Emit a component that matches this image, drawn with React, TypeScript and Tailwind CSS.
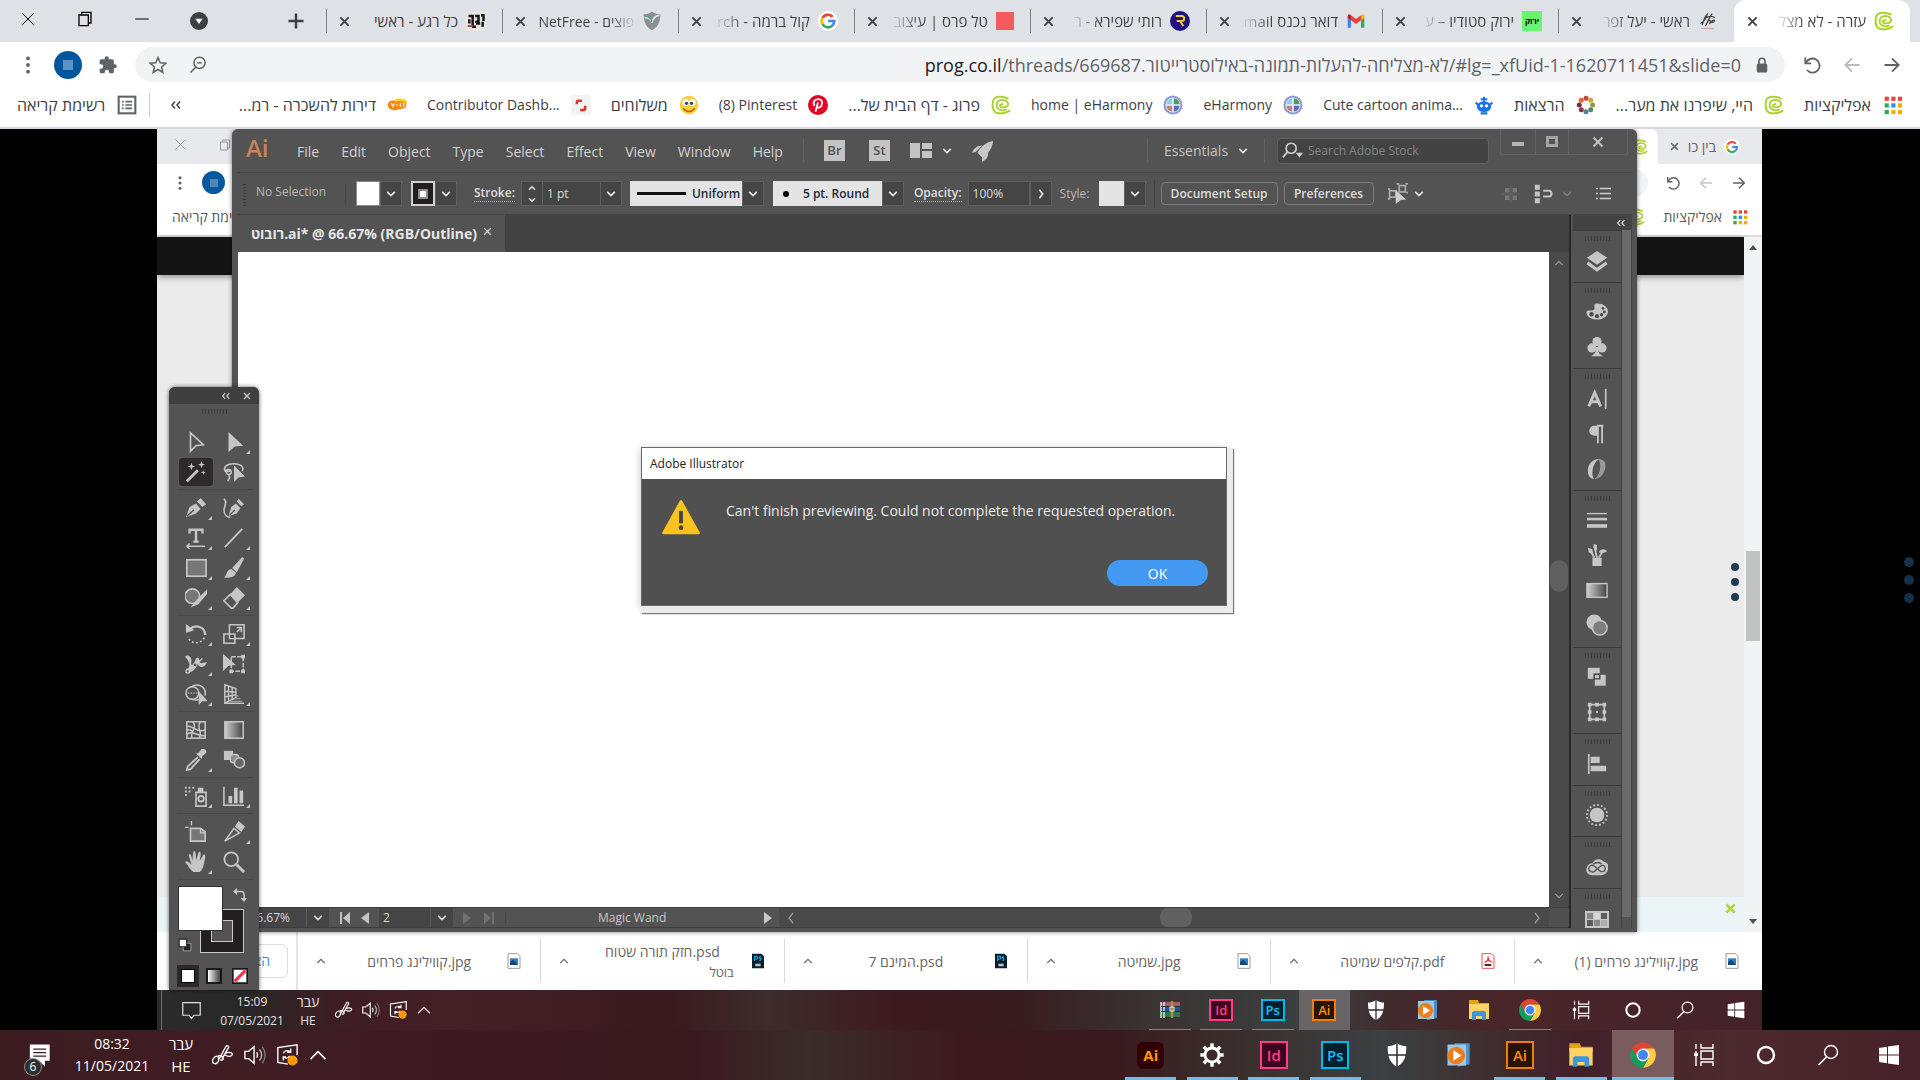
import type { ReactNode } from "react";

type IconProps = { className?: string };

const FONT = "font-['Open_Sans','Noto_Sans','Liberation_Sans',sans-serif]";

/* ---------- small shared glyphs ---------- */

function Svg({ children, className = "w-5 h-5", box = 24 }: IconProps & { children: ReactNode; box?: number }) {
  return (
    <svg viewBox={`0 0 ${box} ${box}`} className={`shrink-0 ${className}`} fill="none" aria-hidden="true">
      {children}
    </svg>
  );
}

function Cross({ className, width = 3 }: IconProps & { width?: number }) {
  return (
    <Svg className={className}>
      <path d="M3 3 21 21M21 3 3 21" stroke="currentColor" strokeWidth={width} />
    </Svg>
  );
}

function Chevron({ className, dir = "down", width = 4 }: IconProps & { dir?: "down" | "up" | "left" | "right"; width?: number }) {
  const d = {
    down: "M3 7l9 9 9-9",
    up: "M3 17l9-9 9 9",
    left: "M16 2l-8 10 8 10",
    right: "M8 2l8 10-8 10",
  }[dir];
  return (
    <Svg className={className}>
      <path d={d} stroke="currentColor" strokeWidth={width} />
    </Svg>
  );
}

function DoubleLeft({ className }: IconProps) {
  return (
    <Svg className={className}>
      <path d="M10 5 4 12l6 7M20 5l-6 7 6 7" stroke="currentColor" strokeWidth="3" />
    </Svg>
  );
}

function Swirl({ className }: IconProps) {
  return (
    <Svg className={className}>
      <path
        d="M20 4C14 1 4 1 2.500 7 1.500 12 2 18 5 20.500c4 2.500 12 2 17-1.500"
        stroke="#a9d32a"
        strokeWidth="2.400"
        strokeLinecap="round"
      />
      <path
        d="M18 17.500c-5 1.500-10 .5-11-3.500C6 8.500 9 6 13.500 6c5 0 7.500 3 7 5.500-.5 3.500-8 4-9.500 2.500-1-1.500 0-3 3-3"
        stroke="#a9d32a"
        strokeWidth="2.200"
        strokeLinecap="round"
      />
    </Svg>
  );
}

function GoogleG({ className }: IconProps) {
  return (
    <Svg className={className}>
      <circle cx="12" cy="12" r="12" fill="#fff" />
      <path d="M17.500 7A7.600 7.600 0 0 0 5.400 8.200" stroke="#ea4335" strokeWidth="3.200" />
      <path d="M5.400 8.200a7.600 7.600 0 0 0 0 7.600" stroke="#fbbc05" strokeWidth="3.200" />
      <path d="M5.400 15.800A7.600 7.600 0 0 0 17 17.700" stroke="#34a853" strokeWidth="3.200" />
      <path d="M17 17.700A7.600 7.600 0 0 0 19.600 12H12.200" stroke="#4285f4" strokeWidth="3.200" />
    </Svg>
  );
}

function AppsGrid({ className }: IconProps) {
  const colors = ["#ea4335", "#ea4335", "#ea4335", "#34a853", "#2f8ff0", "#f9ab00", "#34a853", "#f9ab00", "#f9ab00"];
  return (
    <Svg className={className}>
      {colors.map((c, i) => (
        <rect key={i} x={2 + (i % 3) * 8} y={2 + Math.floor(i / 3) * 8} width="5" height="5" fill={c} />
      ))}
    </Svg>
  );
}

function Reload({ className }: IconProps) {
  return (
    <Svg className={className}>
      <path d="M5 9a8.500 8.500 0 1 1 1 9" stroke="currentColor" strokeWidth="2.200" />
      <path d="M4 3v7h7" stroke="currentColor" strokeWidth="2.200" />
    </Svg>
  );
}

function Arrow({ className, dir }: IconProps & { dir: "left" | "right" }) {
  return (
    <Svg className={className}>
      <path
        d={dir === "left" ? "M21 12H4M12 4l-8 8 8 8" : "M3 12h17M12 4l8 8-8 8"}
        stroke="currentColor"
        strokeWidth="2.200"
      />
    </Svg>
  );
}

function Dots({ className }: IconProps) {
  return (
    <Svg className={className}>
      <circle cx="12" cy="4" r="2.300" fill="currentColor" />
      <circle cx="12" cy="12" r="2.300" fill="currentColor" />
      <circle cx="12" cy="20" r="2.300" fill="currentColor" />
    </Svg>
  );
}

/* ---------- favicons ---------- */

const favicons: Record<string, ReactNode> = {
  swirl: <Swirl className="w-5 h-5" />,
  google: <GoogleG className="w-5 h-5" />,
  script: (
    <Svg>
      <path d="M3 15c4-2 7-7 8-11-4 4-5 10-6 13M9 18c2-4 5-11 8-15M8 9c5-3 9-3 12-1M12 12c2-2 4-1 2 4M15 14c3-4 6-4 4-1-1 1-3 1-3 0" stroke="#444" strokeWidth="1.500" />
      <path d="M4 21h15" stroke="#d9a3ae" strokeWidth="1.500" />
    </Svg>
  ),
  green: (
    <span className="flex h-5 w-5 shrink-0 items-center justify-center bg-[#6af56e] text-[8px] font-bold text-black">ירוק</span>
  ),
  gmail: (
    <Svg>
      <path d="M2 6v14h4V10z" fill="#4285f4" />
      <path d="M22 6v14h-4V10z" fill="#34a853" />
      <path d="M6 5v6l6 4.500 6-4.500V5l-6 4.500z" fill="#ea4335" />
      <path d="M2 6c0-2 2-3 4-1v6l-4-3z" fill="#c5221f" />
      <path d="M22 6c0-2-2-3-4-1v6l4-3z" fill="#fbbc04" />
    </Svg>
  ),
  ruti: (
    <Svg>
      <circle cx="12" cy="12" r="12" fill="#1f1183" />
      <path d="M7 6h7c4 0 4 6 0 6H8M12 12l4 6" stroke="#f2cf1d" strokeWidth="2.400" />
    </Svg>
  ),
  square: <span className="h-[18px] w-[18px] shrink-0 bg-[#f25c61]" />,
  shield: (
    <Svg>
      <path d="M12 1c3 2 6 3 10 3 0 9-3 16-10 19C5 20 2 13 2 4c4 0 7-1 10-3z" fill="#8c8f91" />
      <path d="M3 8c5 0 8 2 9 6 1-5 3-8 9-9" stroke="#cfe8e2" strokeWidth="2" />
      <path d="M4 6c5 1 7 3 8 7" stroke="#3f9d8b" strokeWidth="1.500" />
    </Svg>
  ),
  rega: (
    <Svg>
      <rect width="24" height="24" fill="#e8e5e3" />
      <path d="M3 6h5v11M4 10v5M11 6h4v7h-4M18 5h3v7M12 15h5M20 13v6M7 19h5" stroke="#161616" strokeWidth="3" />
      <path d="M2 18h6" stroke="#c5483f" strokeWidth="2.500" />
    </Svg>
  ),
  flower: (
    <Svg>
      {["#c7443a", "#d9a02e", "#8f9a3c", "#4c8a6a", "#58818f", "#8c3356", "#7a2a3a", "#e0672f"].map((c, i) => (
        <circle key={c} cx={12 + 8 * Math.sin((i * Math.PI) / 4)} cy={12 - 8 * Math.cos((i * Math.PI) / 4)} r="3" fill={c} />
      ))}
    </Svg>
  ),
  robot: (
    <Svg>
      <ellipse cx="12" cy="14" rx="8.500" ry="6.500" fill="#1a73e8" />
      <path d="M12 2v6M8 5h8M2 9l3 3M22 9l-3 3M8 22h8" stroke="#1a73e8" strokeWidth="2.500" />
      <circle cx="9" cy="13" r="2" fill="#fff" />
      <circle cx="15" cy="13" r="2" fill="#fff" />
    </Svg>
  ),
  harmony: (
    <Svg>
      <circle cx="12" cy="12" r="11.500" fill="#8e9ad6" />
      <circle cx="12" cy="12" r="9" fill="#eef0fb" />
      <path d="M11 4v7H4a8 8 0 0 1 7-7z" fill="#8fd0e8" />
      <path d="M13 4v7h7a8 8 0 0 0-7-7z" fill="#4f9b4a" />
      <path d="M11 20v-7H4a8 8 0 0 0 7 7z" fill="#c9826f" />
      <path d="M13 20v-7h7a8 8 0 0 1-7 7z" fill="#5a6dc4" />
    </Svg>
  ),
  pinterest: (
    <Svg>
      <circle cx="12" cy="12" r="12" fill="#e60023" />
      <path d="M9 20l3-11M8 13c-3-4 0-8 4-8 5 0 6 4 4 8-1 2-4 3-5 1" stroke="#fff" strokeWidth="2.200" />
    </Svg>
  ),
  smiley: (
    <Svg>
      <circle cx="12" cy="12" r="11" fill="#f8cf3a" />
      <circle cx="8" cy="9" r="4" fill="#fff" />
      <circle cx="16" cy="9" r="4" fill="#fff" />
      <circle cx="9" cy="10" r="2" fill="#24506e" />
      <circle cx="15" cy="10" r="2" fill="#24506e" />
      <path d="M5 16c4 5 10 5 14 0" stroke="#b36a12" strokeWidth="1.800" />
    </Svg>
  ),
  shutter: (
    <Svg>
      <rect width="24" height="24" fill="#f3f3f3" />
      <path d="M7 11V9c0-1 1-2 2-2h4M17 13v3c0 1-1 2-2 2h-4" stroke="#ee2b24" strokeWidth="3" />
    </Svg>
  ),
  yad2: (
    <Svg>
      <path d="M1 12c0-5 5-6 9-5 4-2 13-2 13 3 1 6-3 7-8 7-5 2-14 2-14-5z" fill="#f58a12" />
      <path d="M10 7c4-2 13-2 13 3" stroke="#ffd21c" strokeWidth="3" />
      <path d="M5 10l2 3 2-3M7 13v2M11 12h2M16 10v4M19 10h1v4" stroke="#fff" strokeWidth="1.300" />
    </Svg>
  ),
};

const tabs = [
  { title: "ראשי - יעל זפר", icon: "script" },
  { title: "ירוק סטודיו – ע", icon: "green" },
  { title: "דואר נכנס mail", icon: "gmail" },
  { title: "רותי שפירא - ר", icon: "ruti" },
  { title: "טל פרס | עיצוב", icon: "square" },
  { title: "קול ברמה - rch", icon: "google" },
  { title: "NetFree - פוצים", icon: "shield", ltr: true },
  { title: "כל רגע - ראשי", icon: "rega", full: true },
];

const bookmarks = [
  { title: "היי, שיפרנו את מער...", icon: "swirl" },
  { title: "הרצאות", icon: "flower" },
  { title: "Cute cartoon anima...", icon: "robot", ltr: true },
  { title: "eHarmony", icon: "harmony", ltr: true },
  { title: "home | eHarmony", icon: "harmony", ltr: true },
  { title: "פרוג - דף הבית של...", icon: "swirl" },
  { title: "(8) Pinterest", icon: "pinterest", ltr: true },
  { title: "משלוחים", icon: "smiley" },
  { title: "Contributor Dashb...", icon: "shutter", ltr: true },
  { title: "דירות להשכרה - רמ...", icon: "yad2" },
];

/* ---------- outer browser ---------- */

type TabProps = { title: string; icon: string; ltr?: boolean; active?: boolean; full?: boolean };

function Tab({ title, icon, ltr, active, full }: TabProps) {
  const ink = full
    ? "text-[#3c4043]"
    : ltr
      ? "bg-gradient-to-l from-[#3c404320] to-[#3c4043] to-25% bg-clip-text text-transparent"
      : "bg-gradient-to-r from-[#3c404320] to-[#3c4043] to-30% bg-clip-text text-transparent";
  return (
    <div
      className={`flex h-full w-44 shrink-0 items-center gap-2 pr-4 pl-3 ${
        active ? "rounded-t-xl bg-white" : "relative after:absolute after:top-[9px] after:left-0 after:h-6 after:w-px after:bg-[#80868b]"
      }`}
    >
      {favicons[icon]}
      <span dir={ltr ? "ltr" : "rtl"} className={`shrink-0 whitespace-nowrap ${ltr ? "text-[14px]" : "text-[15px]"} ${ink}`}>
        {title}
      </span>
      <button aria-label={`סגירה ${title}`} className="mr-auto p-px text-[#3c4043]">
        <Cross className="h-[11px] w-[11px]" width={4} />
      </button>
    </div>
  );
}

function BrowserHeader() {
  return (
    <header dir="rtl" className="shrink-0 bg-white">
      <div className="flex h-[42px] bg-[#dee1e6] pr-2.5">
        <Tab title="עזרה - לא מצל" icon="swirl" active />
        {tabs.map((t) => (
          <Tab key={t.title} {...t} />
        ))}
        <button aria-label="כרטיסייה חדשה" className="mr-5 text-[#3c4043]">
          <Svg className="h-5 w-5">
            <path d="M12 3v18M3 12h18" stroke="currentColor" strokeWidth="3" />
          </Svg>
        </button>
        <div dir="ltr" className="mr-auto flex items-center pb-1 pl-5 text-black">
          <button aria-label="סגור" className="w-[57px]">
            <Cross className="h-4 w-4" width={1.5} />
          </button>
          <button aria-label="שחזר" className="w-[57px]">
            <Svg className="h-4 w-4">
              <path d="M3 6h14v16H3zM7 6V2h14v16h-4" stroke="currentColor" strokeWidth="2" />
            </Svg>
          </button>
          <button aria-label="מזער" className="w-14">
            <Svg className="h-4 w-4">
              <path d="M2 12h20" stroke="currentColor" strokeWidth="1.500" />
            </Svg>
          </button>
          <button aria-label="חיפוש כרטיסיות" className="pt-1">
            <Svg className="h-[18px] w-[18px]">
              <circle cx="12" cy="12" r="12" fill="#3c4043" />
              <path d="M7 9h10l-5 7z" fill="#fff" />
            </Svg>
          </button>
        </div>
      </div>

      <div className="flex h-[45px] items-center gap-5 px-[18px] text-[#5f6368]">
        <button aria-label="הבא"><Arrow dir="right" className="h-5 w-5" /></button>
        <button aria-label="הקודם" className="text-[#babcbe]"><Arrow dir="left" className="h-5 w-5" /></button>
        <button aria-label="טען מחדש"><Reload className="h-5 w-5" /></button>
        <div className="mx-[-3px] flex h-[35px] flex-1 items-center gap-3 rounded-full bg-[#f1f3f4] px-[14px]">
          <Svg className="h-[18px] w-[18px]">
            <rect x="5" y="10" width="14" height="12" rx="2" fill="currentColor" />
            <path d="M8 11V7a4 4 0 0 1 8 0v4" stroke="currentColor" strokeWidth="2.200" />
          </Svg>
          <div dir="ltr" className="flex-1 text-right text-[18px] leading-[26px] whitespace-nowrap">
            <span className="text-[#202124]">prog.co.il</span>
            /threads/669687.לא-מצליחה-להעלות-תמונה-באילוסטרייטור/#lg=_xfUid-1-1620711451&slide=0
          </div>
          <button aria-label="התצוגה הוקטנה">
            <Svg className="h-[18px] w-[18px]">
              <circle cx="14" cy="9" r="7.500" stroke="currentColor" strokeWidth="2" />
              <path d="M9 15l-7 7M11 9h6" stroke="currentColor" strokeWidth="2.200" />
            </Svg>
          </button>
          <button aria-label="הוספה לסימניות" className="mr-2.5">
            <Svg className="h-[18px] w-[18px]">
              <path d="M12 2l3 7 7.500.6-5.700 5 1.700 7.400L12 18l-6.500 4 1.700-7.400-5.700-5L9 9z" stroke="currentColor" strokeWidth="2" />
            </Svg>
          </button>
        </div>
        <button aria-label="תוספים">
          <Svg className="h-5 w-5">
            <path d="M20 11h-1V7c0-1-1-2-2-2h-4V4a2.500 2.500 0 0 0-5 0v1H4C3 5 2 6 2 7v4h1.500a2.700 2.700 0 0 1 0 5.400H2V20c0 1 1 2 2 2h4v-1.500a2.700 2.700 0 0 1 5.400 0V22H17c1 0 2-1 2-2v-4h1a2.500 2.500 0 0 0 0-5z" fill="currentColor" />
          </Svg>
        </button>
        <button aria-label="פרופיל" className="mx-[-4px] flex h-7 w-7 items-center justify-center rounded-full bg-[#00569d]">
          <span className="h-[10px] w-[10px] bg-[#5b93c4]" />
        </button>
        <button aria-label="תפריט"><Dots className="h-5 w-5" /></button>
      </div>

      <nav className="flex h-[42px] items-center gap-5 border-b-2 border-[#d7d8de] px-[17px] pb-1 text-[16px] leading-5 whitespace-nowrap text-[#3c4043]">
        <a href="#apps" className="flex items-center gap-3">
          <AppsGrid className="h-5 w-5" />
          אפליקציות
        </a>
        {bookmarks.map((b) => (
          <a key={b.title} href="#bookmark" className="flex items-center gap-[11px]">
            {favicons[b.icon]}
            <span dir={b.ltr ? "ltr" : "rtl"} className={b.ltr ? "text-[14px]" : ""}>
              {b.title}
            </span>
          </a>
        ))}
        <button className="mr-auto" aria-label="סימניות נוספות">
          <DoubleLeft className="h-3 w-3" />
        </button>
        <button className="flex h-6 items-center gap-3 border-r border-[#cbcdd0] pr-3">
          <Svg className="h-5 w-5">
            <rect x="2" y="2" width="20" height="20" stroke="#5f6368" strokeWidth="2.500" />
            <path d="M6 8h2M6 12h2M6 16h2M10 8h8M10 12h8M10 16h8" stroke="#5f6368" strokeWidth="2" />
          </Svg>
          רשימת קריאה
        </button>
      </nav>
    </header>
  );
}

/* ---------- taskbar ---------- */

function Chrome({ className }: IconProps) {
  return (
    <Svg className={className} box={48}>
      <path d="M4.950 13A22 22 0 0 1 43.050 13H24L14.500 29.500Z" fill="#db4437" />
      <path d="M43.050 13A22 22 0 0 1 24 46L33.500 29.500 24 13Z" fill="#ffcd40" />
      <path d="M24 46A22 22 0 0 1 4.950 13L14.500 29.500H33.500Z" fill="#0f9d58" />
      <circle cx="24" cy="24" r="11" fill="#f1f1f1" />
      <circle cx="24" cy="24" r="8.500" fill="#4285f4" />
    </Svg>
  );
}

function AdobeTile({ label, tone, small }: { label: string; tone: string; small?: boolean }) {
  return (
    <span
      className={`flex items-center justify-center border-2 leading-none font-semibold ${tone} ${
        small ? "h-[22px] w-6 text-[13px]" : "h-7 w-7 text-[15px]"
      }`}
    >
      {label}
    </span>
  );
}

const ID = "border-[#ff3f81] bg-[#3d0520] text-[#ff3f81]";
const PS = "border-[#00b8f0] bg-[#01202f] text-[#13c3fb]";
const AI = "border-[#f07c0a] bg-[#261300] text-[#f98c17]";

function appIcon(name: string, small?: boolean): ReactNode {
  const size = small ? "w-6 h-6" : "w-7 h-7";
  switch (name) {
    case "Id":
      return <AdobeTile label="Id" tone={ID} small={small} />;
    case "Ps":
      return <AdobeTile label="Ps" tone={PS} small={small} />;
    case "Ai":
      return <AdobeTile label="Ai" tone={AI} small={small} />;
    case "Ai new":
      return (
        <span className="flex h-[27px] w-[27px] items-center justify-center rounded-md bg-[#330000] text-[15px] leading-none font-bold text-[#ff9a00]">
          Ai
        </span>
      );
    case "WinRAR":
      return (
        <Svg className={size}>
          <rect x="3" y="4" width="19" height="5" fill="#a85c72" />
          <rect x="3" y="9" width="19" height="5" fill="#2454a0" />
          <rect x="3" y="14" width="19" height="5" fill="#2c7a46" />
          <path d="M3 4v16M6 4v16" stroke="#ddd" strokeWidth="1.500" />
          <path d="M3 8.500h19M3 13.500h19" stroke="#20242c" />
          <path d="M14 3v17" stroke="#c0843c" strokeWidth="2.400" />
          <rect x="12" y="9" width="4" height="4" stroke="#eee" />
        </Svg>
      );
    case "Settings":
      return (
        <Svg className={size}>
          <circle cx="12" cy="12" r="6" stroke="#fff" strokeWidth="2.500" />
          {[0, 45, 90, 135, 180, 225, 270, 315].map((a) => (
            <path key={a} d="M12 2V6" stroke="#fff" strokeWidth="3" transform={`rotate(${a} 12 12)`} />
          ))}
        </Svg>
      );
    case "Security":
      return (
        <Svg className={size}>
          <path d="M12 2c3 2 5 2.500 8 2.500C20 14 18 19 12 22 6 19 4 14 4 4.500 7 4.500 9 4 12 2z" fill="#fff" />
          <path d="M12 2v20M4 12h16" stroke="#3b2b2d" strokeWidth="1.300" />
        </Svg>
      );
    case "Media Player":
      return (
        <Svg className={size}>
          <path d="M9 2h13v18l-10 2z" fill="#4b8fc0" />
          <path d="M3 3h16v18H3z" fill="#9cc9e6" />
          <circle cx="10.500" cy="12.500" r="7.500" fill="#ef7c1b" />
          <path d="M8 8v9l7-4.500z" fill="#fff" />
        </Svg>
      );
    case "Explorer":
      return (
        <Svg className={size}>
          <path d="M2 2h9l1 3h10v4H2z" fill="#e2a512" />
          <path d="M2 6h20v15H2z" fill="#ffd264" />
          <path d="M5 22v-7c0-1 1-2 2-2h10c1 0 2 1 2 2v7h-4v-4H9v4z" fill="#3a96dd" />
        </Svg>
      );
    case "Chrome":
      return <Chrome className={size} />;
    case "Task View":
      return (
        <Svg className={small ? "w-5 h-5" : "w-6 h-6"}>
          <path d="M3 1v5M3 8v15M8 1v4h12V1M8 8h12v8H8zM8 23v-4h12v4" stroke="#fff" strokeWidth="1.400" />
          <rect x="1" y="10" width="4" height="3" fill="#fff" />
        </Svg>
      );
    case "Cortana":
      return (
        <Svg className={small ? "w-5 h-5" : "w-6 h-6"}>
          <circle cx="12" cy="12" r="8" stroke="#fff" strokeWidth="2.400" />
        </Svg>
      );
    case "Search":
      return (
        <Svg className={small ? "w-5 h-5" : "w-6 h-6"}>
          <circle cx="15" cy="9" r="6.500" stroke="#fff" strokeWidth="1.400" />
          <path d="M10.500 14l-8 8" stroke="#fff" strokeWidth="1.600" />
        </Svg>
      );
    default:
      return (
        <Svg className={small ? "w-5 h-5" : "w-6 h-6"}>
          <path d="M2 5l8-1.200V11.500H2zM11 3.600L22 2v9.500H11zM2 12.500h8v7.700L2 19zM11 12.500h11V22l-11-1.600z" fill="#fff" />
        </Svg>
      );
  }
}

function TrayIcons({ small }: { small?: boolean }) {
  const size = small ? "w-[18px] h-[18px]" : "w-[22px] h-[22px]";
  return (
    <div className={`flex items-center ${small ? "gap-[9px]" : "gap-2.5"}`}>
      <Svg className={size}>
        <path
          d="M6 13c-5 1-7 6-4 8 4 2 6-3 5-6-1-2 1-3 3-2 4 2 2 6-1 4M8 16 15 3c1-2 4-1 3 1l-7 12M15 10c4-2 8 0 7 2s-5 2-8 0"
          stroke="#fff"
          strokeWidth="1.500"
        />
      </Svg>
      <Svg className={size}>
        <path d="M1 8h4l6-5v18l-6-5H1z" stroke="#fff" strokeWidth="1.500" />
        <path d="M14 9c1 2 1 4 0 6" stroke="#fff" strokeWidth="1.500" />
        <path d="M17 6c3 4 3 8 0 12" stroke="#bbb" strokeWidth="1.500" />
        <path d="M20 3c4 6 4 12 0 18" stroke="#777" strokeWidth="1.500" />
      </Svg>
      <Svg className={size}>
        <path d="M23 12V1L2 4v16l11 2" stroke="#fff" strokeWidth="1.500" />
        <path d="M8 10c1-3 6-4 8-1M16 5v4h-4M15 13c-2 3-5 3-7 1M8 18v-4h3" stroke="#fff" strokeWidth="1.500" />
        <circle cx="18" cy="18" r="5.500" fill="#ff9a0a" />
      </Svg>
      <Chevron dir="up" width={2} className={small ? "h-4 w-4" : "h-5 w-5"} />
    </div>
  );
}

type App = { name: string; running?: boolean; active?: boolean };

const outerApps: App[] = [
  { name: "Ai new", running: true },
  { name: "Settings", running: true },
  { name: "Id", running: true },
  { name: "Ps", running: true },
  { name: "Security" },
  { name: "Media Player" },
  { name: "Ai", running: true },
  { name: "Explorer", running: true },
  { name: "Chrome", running: true, active: true },
  { name: "Task View" },
  { name: "Cortana" },
  { name: "Search" },
  { name: "Start" },
];

const innerApps: App[] = [
  { name: "WinRAR", running: true },
  { name: "Id", running: true },
  { name: "Ps", running: true },
  { name: "Ai", active: true },
  { name: "Security" },
  { name: "Media Player" },
  { name: "Explorer" },
  { name: "Chrome", running: true },
  { name: "Task View" },
  { name: "Cortana" },
  { name: "Search" },
  { name: "Start" },
];

function OuterTaskbar() {
  return (
    <footer className="flex h-[50px] shrink-0 bg-[linear-gradient(90deg,#3b1c21_0%,#401c23_12%,#3a191f_36%,#3a2c2b_42%,#3d1a20_50%,#391a1e_58%,#3a2b29_63%,#3b4042_72%,#3f3031_77%,#41202a_82%,#4d2a2c_90%,#47212a_100%)] text-white">
      <button aria-label="Notifications" className="relative ml-6 w-8">
        <Svg className="h-7 w-7">
          <path d="M5 3h17v14h-4v5l-5-5H5z" fill="#fff" />
          <path d="M8 7h11M8 10h11M8 13h11" stroke="#3b1c21" strokeWidth="1.200" />
        </Svg>
        <span className="absolute bottom-1 left-0 flex h-[18px] w-[18px] items-center justify-center rounded-full border border-[#8d8d8d] bg-[#2f2f2f] text-[12px]">
          6
        </span>
      </button>
      <div className="w-28 text-center text-[14px] leading-[22px]">
        <div className="pt-[3px]">08:32</div>
        <div>11/05/2021</div>
      </div>
      <div className="w-[26px] text-center text-[15px] leading-[22px] whitespace-nowrap">
        <div className="pt-[3px]">עבר</div>
        <div>HE</div>
      </div>
      <div className="ml-[18px] flex">
        <TrayIcons />
      </div>
      <div className="ml-auto flex w-[800px]">
        {outerApps.map((a) => (
          <button
            key={a.name}
            aria-label={a.name}
            className={`relative flex flex-1 items-center justify-center ${a.active ? "bg-[#7b5c5e]" : ""}`}
          >
            {appIcon(a.name)}
            {a.running && <span className={`absolute bottom-0 h-[3px] bg-[#76b9ed] ${a.active ? "w-full" : "w-[51px]"}`} />}
          </button>
        ))}
      </div>
    </footer>
  );
}

function InnerTaskbar() {
  return (
    <div className="flex h-10 shrink-0 bg-[linear-gradient(90deg,#2b2b2b_0%,#292828_5%,#3c1d22_11%,#452026_18%,#3a1a1f_32%,#3d2c2b_38%,#3d1a20_46%,#381d20_54%,#3a3433_62%,#3c3f40_72%,#412a2c_77%,#4a262a_84%,#45222a_100%)] text-[#e6e0e0]">
      <span className="ml-1 w-px bg-[#6d6d6d]" />
      <Svg className="mt-[11px] ml-5 h-[19px] w-[19px]">
        <path d="M1 2h22v16h-8l-3 4-3-4H1z" stroke="currentColor" strokeWidth="1.500" />
      </Svg>
      <div className="ml-3.5 w-[74px] text-center text-[12px] leading-[19px]">
        <div className="pt-0.5">15:09</div>
        <div>07/05/2021</div>
      </div>
      <div className="ml-[7px] w-6 text-center leading-[19px]">
        <div className="pt-0.5 text-[14px]">עבר</div>
        <div className="text-[12px]">HE</div>
      </div>
      <div className="ml-[15px] flex">
        <TrayIcons small />
      </div>
      <div className="ml-auto flex w-[618px]">
        {innerApps.map((a) => (
          <button
            key={a.name}
            aria-label={a.name}
            className={`relative flex flex-1 items-center justify-center ${a.active ? "bg-[#686365]" : ""}`}
          >
            {appIcon(a.name, true)}
            {a.running && <span className="absolute bottom-0 h-px w-[42px] bg-[#6f86a8]" />}
          </button>
        ))}
      </div>
    </div>
  );
}

/* ---------- page shown behind the Illustrator window ---------- */

function FileIcon({ kind }: { kind: string }) {
  if (kind === "psd") {
    return (
      <Svg className="h-4 w-4">
        <path d="M3 1h14l4 4v18H3z" fill="#071e2c" />
        <path d="M7 12V5h3c2 0 2 4 0 4H7M17 6c-3-1-4 1-2 2s2 3-1 3" stroke="#29b3f2" strokeWidth="1.600" />
        <path d="M8 18h8" stroke="#bbb" strokeWidth="4" />
      </Svg>
    );
  }
  if (kind === "pdf") {
    return (
      <Svg className="h-4 w-4">
        <path d="M3 1h14l4 4v18H3z" fill="#fff" stroke="#ef5350" strokeWidth="1.500" />
        <path d="M12 5c1 5-2 8-5 9 3-3 8-3 10-1-4-1-5-5-5-8z" stroke="#e53935" strokeWidth="1.800" />
        <path d="M7 18h10" stroke="#333" strokeWidth="3" />
      </Svg>
    );
  }
  return (
    <Svg className="h-4 w-4">
      <path d="M3 1h14l4 4v18H3z" fill="#fff" stroke="#9a9a9a" strokeWidth="1.500" />
      <path d="M6 8h12v10H6z" fill="#2e7fc2" />
      <path d="M6 18v-4l5-4 7 8z" fill="#17456f" />
    </Svg>
  );
}

const downloads = [
  { name: "קווילינג פרחים.jpg", kind: "jpg" },
  { name: "חזק תורה שטוח.psd", kind: "psd", note: "בוטל" },
  { name: "המינם 7.psd", kind: "psd" },
  { name: "שמיטה.jpg", kind: "jpg" },
  { name: "קלפים שמיטה.pdf", kind: "pdf" },
  { name: "קווילינג פרחים (1).jpg", kind: "jpg" },
];

function InnerBrowser() {
  return (
    <div className="flex flex-1 flex-col bg-white">
      <div className="flex h-[35px] shrink-0 justify-between bg-[#e7e9ed]">
        <div className="flex items-center gap-8 pb-1 pl-[17px] text-[#999]">
          <Cross className="h-[13px] w-[13px]" width={1.8} />
          <Svg className="h-3 w-3">
            <path d="M3 6h14v16H3zM7 6V2h14v16h-4" stroke="currentColor" strokeWidth="2" />
          </Svg>
        </div>
        <div className="flex">
          <div className="flex w-40 items-center justify-end rounded-tr-lg bg-white pr-2.5">
            <Swirl className="h-4 w-4" />
          </div>
          <div className="flex w-[104px] items-center gap-2 pr-[22px] pl-3 text-[14px] text-[#666]">
            <Cross className="h-[9px] w-[9px]" width={4} />
            <span dir="rtl" className="flex-1 text-right whitespace-nowrap">
              בין כו
            </span>
            <GoogleG className="h-4 w-4" />
          </div>
        </div>
      </div>
      <div className="flex h-[38px] shrink-0 items-center justify-between text-[#5f6368]">
        <div className="flex items-center gap-3.5 pb-px pl-[15px]">
          <Dots className="h-4 w-4" />
          <span className="flex h-[23px] w-[23px] items-center justify-center rounded-full bg-[#07589c]">
            <span className="h-2 w-2 bg-[#4d86b8]" />
          </span>
        </div>
        <div className="flex items-center gap-[17px] pr-[15px]">
          <span className="h-7 w-28 rounded-full bg-[#f1f3f4]" />
          <Reload className="h-4 w-4" />
          <Arrow dir="left" className="h-4 w-4 text-[#c5c5c5]" />
          <Arrow dir="right" className="h-4 w-4" />
        </div>
      </div>
      <div className="flex h-[35px] shrink-0 items-center justify-between border-b-2 border-[#dcdcdf] pb-1 text-[14px] whitespace-nowrap text-[#5a5a5a]">
        <span dir="rtl" className="pl-[15px]">
          רשימת קריאה
        </span>
        <div className="flex items-center gap-2.5 pr-3.5">
          <Swirl className="mr-2 h-[18px] w-[18px]" />
          אפליקציות
          <AppsGrid className="h-4 w-4" />
        </div>
      </div>

      <div className="flex flex-1">
        <div className="flex flex-1 flex-col bg-[#ebebeb]">
          <div className="h-[38px] bg-[#141414] shadow-[0_2px_6px_#0006]" />
          <div className="flex flex-1 flex-col items-end justify-center gap-[7px] pr-[5px] pb-2">
            <span className="h-2 w-2 rounded-full bg-[#1f3d52]" />
            <span className="h-2 w-2 rounded-full bg-[#1f3d52]" />
            <span className="h-2 w-2 rounded-full bg-[#1f3d52]" />
          </div>
          <div className="flex h-[35px] justify-end bg-[#ebf5f7] pt-1.5 pr-2">
            <Cross className="h-[11px] w-[11px] text-[#b5d334]" width={6} />
          </div>
        </div>
        <div className="flex w-[18px] flex-col items-center justify-between bg-[#f1f3f4] py-2">
          <svg viewBox="0 0 8 5" className="h-[5px] w-2"><path d="M0 5l4-5 4 5z" fill="#505050" /></svg>
          <span className="mb-[-22px] h-[90px] w-3.5 bg-[#c1c3c3]" />
          <svg viewBox="0 0 8 5" className="h-[5px] w-2"><path d="M0 0l4 5 4-5z" fill="#505050" /></svg>
        </div>
      </div>

      <div className="flex h-[58px] shrink-0 pr-1 text-[14px] leading-5 text-[#666]">
        <div className="flex w-[141px] items-center justify-end border-r-2 border-[#e4e4e4] pr-2">
          <a href="#show-all" dir="rtl" className="flex h-[34px] w-[90px] items-center justify-start rounded-md border border-[#ddd] pr-[17px] text-[#3d8fd4]">
            הצגת הכול
          </a>
        </div>
        {downloads.map((d, i) => (
          <div key={d.name} className="flex flex-1 items-center py-[7px]">
            <div className={`flex h-full flex-1 items-center justify-between px-[18px] ${i < 5 ? "border-r border-[#dadada]" : ""}`}>
              <Chevron dir="up" width={3} className="h-2.5 w-2.5" />
              <div className="pt-0.5 pl-1.5 text-center whitespace-nowrap">
                <div>{d.name}</div>
                {d.note && <div className="mr-[-14px] text-right text-[13px]">{d.note}</div>}
              </div>
              <FileIcon kind={d.kind} />
            </div>
          </div>
        ))}
      </div>
    </div>
  );
}

/* ---------- Illustrator window ---------- */

function DropButton({ label, dir = "down" }: { label: string; dir?: "down" | "right" }) {
  return (
    <button aria-label={label} className="flex h-[25px] w-[22px] items-center justify-center border border-[#5f5f5f] bg-[#454545] text-[#e8e8e8]">
      <Chevron dir={dir} className="h-2.5 w-2.5" />
    </button>
  );
}

const menus = ["File", "Edit", "Object", "Type", "Select", "Effect", "View", "Window", "Help"];

function MenuBar() {
  return (
    <div className="flex h-[43px] items-center pl-3.5 text-[14px] text-[#d2d2d2]">
      <span className="w-[51px] pb-1.5 text-[24px] font-semibold text-[#c98256]">Ai</span>
      <nav className="flex gap-[22px] pt-0.5">
        {menus.map((m) => (
          <button key={m}>{m}</button>
        ))}
      </nav>
      <span className="ml-5 h-6 w-px bg-[#606060]" />
      <button className="ml-5 h-[21px] w-[21px] bg-[#c3c3c3] text-[13px] leading-none font-semibold text-[#505050]">Br</button>
      <button className="ml-6 h-[21px] w-[21px] bg-[#c3c3c3] text-[13px] leading-none font-semibold text-[#505050]">St</button>
      <button aria-label="Arrange Documents" className="ml-5 flex items-center gap-2.5">
        <svg viewBox="0 0 22 15" className="h-[15px] w-[22px]">
          <path d="M0 0h10v15H0zM12 0h10v6H12zM12 8h10v7H12z" fill="#c3c3c3" />
        </svg>
        <Chevron className="h-2.5 w-2.5 text-[#e8e8e8]" />
      </button>
      <button aria-label="GPU Performance" className="ml-5">
        <Svg className="h-[22px] w-[22px]">
          <path d="M23 1C16 2 9 7 6 14l5 5c7-4 11-10 12-18z" fill="#c8c8c8" />
          <path d="M11 6C6 6 2 9 0 14l4-1zM17 13c2 4-1 8-6 11v-6z" fill="#c8c8c8" />
        </Svg>
      </button>
      <div className="ml-auto flex h-full items-center">
        <span className="h-6 w-px bg-[#606060]" />
        <div className="relative ml-4 flex items-center">
          <select aria-label="Workspace" className="w-[88px] appearance-none text-[14px] text-[#c3c3c3]">
            <option>Essentials</option>
          </select>
          <Chevron className="pointer-events-none absolute right-1 h-2.5 w-2.5 text-[#e8e8e8]" />
        </div>
        <span className="ml-3 h-6 w-px bg-[#606060]" />
        <label className="ml-3 flex h-[26px] w-[212px] items-center gap-1 rounded-sm border border-[#606060] bg-[#434343] px-1">
          <Svg className="h-[22px] w-[22px]">
            <circle cx="10" cy="9" r="5.500" stroke="#cfcfcf" strokeWidth="1.800" />
            <path d="M6 13l-5 6" stroke="#cfcfcf" strokeWidth="2" />
            <path d="M15 14h8l-4 5z" fill="#cfcfcf" />
          </Svg>
          <input type="search" aria-label="Search Adobe Stock" placeholder="Search Adobe Stock" className="w-full min-w-0 bg-transparent text-[12px] placeholder-[#858585] outline-none" />
        </label>
        <div className="mr-[9px] ml-[11px] flex h-[26px] self-start border border-t-0 border-[#606060] text-[#c0c0c0]">
          <button aria-label="Minimize" className="flex w-[34px] items-center justify-center pt-1">
            <span className="h-1 w-3 bg-[#b5b5b5]" />
          </button>
          <button aria-label="Maximize" className="flex w-[34px] items-center justify-center border-x border-[#606060]">
            <span className="h-[11px] w-3 border-[3px] border-[#a5a5a5]" />
          </button>
          <button aria-label="Close" className="flex w-[58px] items-center justify-center">
            <Cross className="h-3 w-3" width={4} />
          </button>
        </div>
      </div>
    </div>
  );
}

function ControlBar() {
  return (
    <div className="mx-[5px] flex h-[43px] items-center border-y border-[#464646] text-[12px] text-[#dedede]">
      <span className="ml-1.5 h-6 w-[3px] bg-[repeating-linear-gradient(0deg,#404040_0_1px,transparent_1px_3px)]" />
      <span className="ml-2.5 w-[90px] border-r border-[#4a4a4a] pb-1 text-[#b9b9b9]">No Selection</span>
      <button aria-label="Fill" className="ml-2.5 h-[25px] w-6 border border-[#888] bg-white" />
      <DropButton label="Fill options" />
      <button aria-label="Stroke color" className="ml-[9px] flex h-[25px] w-6 items-center justify-center border-2 border-[#d0d0d0] bg-[#231f20]">
        <span className="h-2.5 w-2.5 border-2 border-[#8c8c8c] bg-white" />
      </button>
      <DropButton label="Stroke color options" />
      <label htmlFor="stroke" className="ml-[17px] border-b border-dotted border-[#aaa] leading-4 font-semibold">Stroke:</label>
      <div className="ml-1.5 flex">
        <button aria-label="Stroke weight stepper" className="flex h-[25px] w-[22px] flex-col items-center justify-center gap-1 border border-[#5f5f5f] bg-[#454545] text-[#e8e8e8]">
          <Chevron dir="up" className="h-2 w-2.5" />
          <Chevron className="h-2 w-2.5" />
        </button>
        <input id="stroke" defaultValue="1 pt" className="h-[25px] w-[57px] border-y border-[#5f5f5f] bg-[#454545] pl-1 outline-none" />
        <DropButton label="Stroke weights" />
      </div>
      <div className="ml-2 flex h-[25px] w-28 items-center bg-[#e4e4e4] pl-[7px] text-[#222a3a]">
        <span className="h-[3px] w-[49px] shrink-0 bg-[#14100f]" />
        <select aria-label="Variable Width Profile" className="w-[56px] appearance-none pl-1.5 font-semibold">
          <option>Uniform</option>
        </select>
      </div>
      <DropButton label="Width profiles" />
      <div className="ml-[9px] flex h-[25px] w-[109px] items-center bg-[#e4e4e4] pl-2.5 text-[#222a3a]">
        <span className="h-1.5 w-1.5 shrink-0 rounded-full bg-black" />
        <select aria-label="Brush Definition" className="w-22 appearance-none pl-3.5 font-semibold">
          <option>5 pt. Round</option>
        </select>
      </div>
      <DropButton label="Brushes" />
      <label htmlFor="opacity" className="ml-2.5 border-b border-dotted border-[#aaa] leading-4 font-semibold">Opacity:</label>
      <input id="opacity" defaultValue="100%" className="ml-1.5 h-[25px] w-[62px] border border-[#5f5f5f] bg-[#454545] pl-1 outline-none" />
      <DropButton label="Opacity slider" dir="right" />
      <span className="ml-2 w-8 text-[#b9b9b9]">Style:</span>
      <button aria-label="Graphic style" className="ml-[7px] h-[25px] w-[25px] bg-[#e4e4e4]" />
      <DropButton label="Graphic styles" />
      <span className="ml-2 h-7 w-px bg-[#454545]" />
      <button className="ml-1.5 h-[23px] w-[117px] rounded-sm border border-[#7a7a7a] font-semibold">Document Setup</button>
      <button className="ml-1.5 h-[23px] w-[90px] rounded-sm border border-[#7a7a7a] font-semibold">Preferences</button>
      <button aria-label="Select similar objects" className="ml-[13px] flex items-center gap-1.5">
        <Svg className="h-[21px] w-[21px]">
          <path d="M3 9h7v7H3zM14 3h7v7h-7z" stroke="#aaa" strokeWidth="2" />
          <path d="M1 7h3M1 18h3M11 1h3M21 1h3M22 11h2" stroke="#aaa" strokeWidth="2" />
          <path d="M10 8l12 11h-6l-6 5z" fill="#d0d0d0" />
        </Svg>
        <Chevron className="h-2.5 w-2.5" />
      </button>
      <div className="mr-[21px] ml-auto flex items-center">
        <Svg className="h-[18px] w-[18px]">
          <path d="M4 4h6v6H4zM14 4h6v6h-6zM4 14h6v6H4zM14 14h6v6h-6z" fill="#767676" />
          <path d="M12 0v24M0 12h24" stroke="#6a6a6a" />
        </Svg>
        <Svg className="ml-3.5 h-5 w-5">
          <path d="M1 1h6v6H1zM1 9h6v6H1zM1 17h6v6H1z" fill="#c3c3c3" />
          <path d="M11 8h7c4 0 4 7 0 7h-7" stroke="#c3c3c3" strokeWidth="2.500" />
        </Svg>
        <Chevron className="ml-2 h-2.5 w-2.5 text-[#7a7a7a]" />
        <Svg className="ml-6 h-[15px] w-[15px]">
          <path d="M0 4h3M0 12h3M0 20h3M6 4h18M6 12h18M6 20h18" stroke="#d0d0d0" strokeWidth="2.600" />
        </Svg>
      </div>
    </div>
  );
}

const G = "#c6c6c6";

const dockGroups: { name: string; art: ReactNode }[][] = [
  [
    { name: "Layers", art: <><path d="M12 1 23 8.500 12 16 1 8.500z" fill={G} /><path d="M1.500 14 12 21.500 22.500 14" stroke={G} strokeWidth="3.500" /></> },
  ],
  [
    { name: "Color", art: <><path d="M10 3c7-1 14 3 14 9-1 7-9 9-15 8-6-1-10-6-8-9 2-2 6 1 8-2 1-2-1-4 1-6z" fill={G} /><g fill="#4a4a4a"><circle cx="6" cy="14.500" r="2.400" /><circle cx="12" cy="16.500" r="2.200" /><circle cx="17" cy="15" r="1.800" /><circle cx="20" cy="12" r="1.600" /><circle cx="18.500" cy="8" r="1.500" /></g></> },
    { name: "Symbols", art: <><circle cx="12" cy="6" r="5" fill={G} /><circle cx="6.500" cy="13" r="5" fill={G} /><circle cx="17.500" cy="13" r="5" fill={G} /><path d="M11 12h2c0 5 1 8 6 10H5c5-2 6-5 6-10z" fill={G} /></> },
  ],
  [
    { name: "Character", art: <><path d="M3 20 9.500 5 16 20M5.500 15h8" stroke={G} strokeWidth="3.200" /><path d="M21.500 1v22" stroke={G} strokeWidth="1.800" /></> },
    { name: "Paragraph", art: <><path d="M13 3H9a5.500 5.500 0 0 0 0 11h4z" fill={G} /><path d="M13 3v19M17.500 3v19M12 3h7" stroke={G} strokeWidth="2" /></> },
    { name: "OpenType", art: <><path d="M14 1C7 1 2 7 2 14c0 6 3 9 7 9-4-4-2-18 5-22z" fill={G} /><path d="M13 1c7 0 9 4 8 10S16 23 9 23c6-3 9-17 4-22z" fill="#999" /></> },
  ],
  [
    { name: "Stroke", art: <><path d="M1 5h22" stroke={G} strokeWidth="1.500" /><path d="M1 11h22" stroke={G} strokeWidth="2.800" /><path d="M1 18.500h22" stroke={G} strokeWidth="4" /></> },
    { name: "Brushes", art: <><path d="M7 15h10v9H7z" fill={G} /><path d="M9 15 4 5M12 15 9 2M14 15l4-7" stroke={G} strokeWidth="2" /><path d="M2 4l5 2 1 6-5-3zM8 0l4 1v6l-3-1zM14 9c2-4 7-4 9-1l-2 1-3 1z" fill={G} /></> },
    { name: "Gradient", art: <><defs><linearGradient id="dg"><stop stopColor="#cfcfcf" /><stop offset="1" stopColor="#444" /></linearGradient></defs><rect x="1" y="5" width="22" height="15" fill="url(#dg)" stroke={G} strokeWidth="1.500" /></> },
    { name: "Transparency", art: <><circle cx="9" cy="9" r="8.500" fill={G} /><circle cx="15" cy="15" r="8" fill="#7d7d7d" stroke={G} strokeWidth="1.600" /></> },
  ],
  [
    { name: "Pathfinder", art: <><path d="M2 2h13v12H2z" fill={G} /><path d="M9 9h13v13H9z" fill={G} stroke="#535353" /><path d="M9 9h6v5H9z" fill={G} stroke="#444" strokeWidth="1.500" /></> },
    { name: "Transform", art: <><path d="M4 4h16v16H4z" stroke={G} strokeWidth="1.800" /><g fill={G}><path d="M2 2h4v4H2zM10 2h4v4h-4zM18 2h4v4h-4zM2 10h4v4H2zM18 10h4v4h-4zM2 18h4v4H2zM10 18h4v4h-4zM18 18h4v4h-4zM11 11h2v2h-2z" /></g></> },
  ],
  [
    { name: "Align", art: <><path d="M3 1v22" stroke={G} strokeWidth="1.800" /><path d="M5 4h10v7H5zM5 14h17v6H5z" fill={G} /></> },
  ],
  [
    { name: "Appearance", art: <><circle cx="12" cy="12" r="8" fill={G} /><circle cx="12" cy="12" r="11" stroke={G} strokeWidth="2" strokeDasharray="2 2.300" /></> },
  ],
  [
    { name: "Libraries", art: <><path d="M7 21C1 21-1 16 1 12c1-3 4-4 6-4 2-5 9-6 12-2 6 1 7 7 4 11-1 3-4 4-7 4z" fill={G} /><path d="M18 17h-2l-7-6c-3-2-6 0-6 3s4 4 6 3l7-6c3-2 5 0 5 3s-2 3-3 3M8 9c3-3 7-2 9 0" stroke="#555" strokeWidth="1.500" /></> },
  ],
];

function Grip() {
  return <span className="h-[5px] w-[25px] bg-[repeating-linear-gradient(90deg,#3d3d3d_0_1px,transparent_1px_3px)]" />;
}

function Dock() {
  return (
    <aside className="flex w-[68px] shrink-0 flex-col border-l-2 border-[#2b2728] bg-[#535353] pr-[5px] pl-0.5">
      <div className="flex h-[15px] shrink-0 items-center justify-end bg-[#434343] pr-1.5 text-[#d8d8d8]">
        <DoubleLeft className="h-2.5 w-2.5" />
      </div>
      <div className="flex min-h-0 flex-1">
        <div className="flex w-[49px] flex-col justify-between overflow-hidden border-r border-[#404040]">
          {dockGroups.map((group) => (
            <div key={group[0].name} className="flex shrink-0 flex-col items-center border-t border-[#3c3c3c] pt-[5px] pb-[5px]">
              <Grip />
              {group.map((p) => (
                <button key={p.name} aria-label={p.name} className="flex h-[35px] items-center justify-center pt-1">
                  <Svg className="h-[22px] w-[22px]">{p.art}</Svg>
                </button>
              ))}
            </div>
          ))}
          <div className="flex shrink-0 flex-col items-center gap-3 border-t border-[#3c3c3c] pt-[5px]">
            <Grip />
            <button aria-label="Swatches" className="grid grid-cols-3 gap-px border-2 border-[#c6c6c6] bg-[#c6c6c6]">
              <span className="h-1.5 w-1.5 bg-[#8a8a8a]" />
              <span className="h-1.5 w-1.5 bg-[#d8d8d8]" />
              <span className="h-1.5 w-1.5 bg-[#5c5c5c]" />
              <span className="h-1.5 w-1.5 bg-[#5c5c5c]" />
              <span className="h-1.5 w-1.5 bg-[#8a8a8a]" />
              <span className="h-1.5 w-1.5 bg-[#b0b0b0]" />
            </button>
          </div>
        </div>
        <div className="flex-1 border-r border-[#444] pb-[11px]">
          <div className="h-full bg-[#6a6a6a]" />
        </div>
      </div>
    </aside>
  );
}

function StatusBar() {
  return (
    <div className="flex h-[21px] items-center border-y border-[#3e3e3e] bg-[#535353] text-[12px] text-[#d8d8d8]">
      <input aria-label="Zoom" defaultValue="66.67%" className="h-full w-[68px] bg-[#454545] pr-4 text-right outline-none" />
      <button aria-label="Zoom levels" className="flex h-full w-[23px] items-center justify-center border-l border-[#5a5a5a] bg-[#454545]">
        <Chevron className="h-2.5 w-2.5" />
      </button>
      <div className="flex w-[50px] items-center justify-center gap-2.5">
        <svg viewBox="0 0 12 12" className="h-3 w-3"><path d="M1 0h2v12H1zM11 0v12L4 6z" fill="#c3c3c3" /></svg>
        <svg viewBox="0 0 8 12" className="h-3 w-2"><path d="M8 0v12L0 6z" fill="#c3c3c3" /></svg>
      </div>
      <input aria-label="Artboard" defaultValue="2" className="h-full w-[51px] bg-[#454545] pl-1 outline-none" />
      <button aria-label="Artboards" className="flex h-full w-[23px] items-center justify-center border-l border-[#5a5a5a] bg-[#454545]">
        <Chevron className="h-2.5 w-2.5" />
      </button>
      <div className="flex w-[53px] items-center justify-center gap-3 border-r border-[#484848]">
        <svg viewBox="0 0 8 12" className="h-3 w-2"><path d="M0 0v12l8-6z" fill="#707070" /></svg>
        <svg viewBox="0 0 12 12" className="h-3 w-3"><path d="M9 0h2v12H9zM1 0v12l7-6z" fill="#707070" /></svg>
      </div>
      <span className="w-[251px] pr-0.5 pl-[92px] text-[#c8c8c8]">Magic Wand</span>
      <div className="flex w-[22px] justify-center">
        <svg viewBox="0 0 8 12" className="h-3 w-2"><path d="M0 0v12l8-6z" fill="#c8c8c8" /></svg>
      </div>
      <div className="flex h-full flex-1 items-center justify-between bg-[#4a4a4a] px-1.5 text-[#9c9c9c]">
        <Chevron dir="left" width={2.5} className="h-3 w-3" />
        <span className="ml-6 h-full w-8 rounded-lg bg-[#606060]" />
        <Chevron dir="right" width={2.5} className="h-3 w-3" />
      </div>
      <span className="h-full w-5 bg-[#505050]" />
    </div>
  );
}

function ErrorDialog() {
  return (
    <div
      role="alertdialog"
      aria-label="Adobe Illustrator"
      className="absolute top-[318px] left-[409px] w-[586px] border border-[#6b6b6b] bg-[#505050] shadow-[3px_4px_0_3px_#ececec,4px_5px_1px_3px_#777,0_2px_8px_#0004]"
    >
      <div className="flex h-[31px] items-center bg-white pl-2 text-[12px] text-[#222]">Adobe Illustrator</div>
      <div className="flex h-[126px] items-start pt-[18px] pl-[18px] text-[14px] text-[#ececec]">
        <Svg className="h-[42px] w-[42px]">
          <path d="M12 2.500 22 20.500H2z" fill="#f7c31c" stroke="#f7c31c" strokeWidth="1.500" strokeLinejoin="round" />
          <path d="M12 8v7" stroke="#444" strokeWidth="2.200" />
          <circle cx="12" cy="17.500" r="1.300" fill="#444" />
        </Svg>
        <p className="ml-6 pt-[3px] whitespace-nowrap">Can't finish previewing. Could not complete the requested operation.</p>
      </div>
      <button className="absolute right-[18px] bottom-[19px] h-[26px] w-[101px] rounded-full bg-[#4398f2] text-[14px] text-white">OK</button>
    </div>
  );
}

function IllustratorWindow() {
  return (
    <section className="absolute top-0 right-[125px] bottom-[98px] left-[75px] flex flex-col rounded-t-md bg-[#535353] shadow-[0_0_4px_#0008]">
      <MenuBar />
      <ControlBar />
      <div className="flex min-h-0 flex-1 pb-1 pl-1.5">
        <div className="flex flex-1 flex-col">
          <div className="flex h-[37px] bg-[#424242]">
            <div className="flex w-[267px] items-center gap-1.5 bg-[#535353] pl-[13px] text-[14px] font-bold whitespace-nowrap text-[#e6e6e6]">
              <span>רובוט.ai* @ 66.67% (RGB/Outline)</span>
              <button aria-label="Close document" className="pb-1">
                <Cross className="h-[9px] w-[9px]" width={3.5} />
              </button>
            </div>
          </div>
          <div className="flex flex-1">
            <div className="flex-1 bg-white" />
            <div className="flex w-5 flex-col items-center justify-between bg-[#4a4a4a] py-1.5 text-[#9c9c9c]">
              <Chevron dir="up" width={2.5} className="h-2.5 w-2.5" />
              <span className="mb-2 h-8 w-[18px] rounded-full bg-[#606060]" />
              <Chevron width={2.5} className="h-2.5 w-2.5" />
            </div>
          </div>
          <StatusBar />
        </div>
        <Dock />
      </div>
      <ErrorDialog />
    </section>
  );
}

/* ---------- floating tools panel ---------- */

type Tool = { name: string; more?: boolean; selected?: boolean; art: ReactNode };

const toolGroups: Tool[][] = [
  [
    { name: "Selection", art: <path d="M6 2l14 13-8 1-6 6z" stroke={G} strokeWidth="1.800" /> },
    { name: "Direct Selection", more: true, art: <path d="M6 1l16 15-9 1-7 6z" fill={G} /> },
    { name: "Magic Wand", selected: true, art: <><path d="M2 22 14 10" stroke={G} strokeWidth="3" /><path d="M7 2l1 3 3 1-3 1-1 3-1-3-3-1 3-1zM18 0l1 3 3 1-3 1-1 3-1-3-3-1 3-1zM20 10l.7 1.800 2 .7-2 .7L20 15l-.7-1.800-2-.7 2-.7z" fill={G} /></> },
    { name: "Lasso", art: <><path d="M3 12C-1 6 5 3 12 3c8 0 11 4 9 8M3 12c0-3 6-4 6 0s-6 3-5 0c1-2 3-1 3 0M6 15c2 2 1 5-1 7" stroke={G} strokeWidth="1.700" /><path d="M12 5l12 12-7 1-5 5z" fill={G} /></> },
  ],
  [
    { name: "Pen", more: true, art: <><path d="M1 22 5 11l7-4 5 6-5 5z" fill={G} /><path d="M2 21l8-7" stroke="#484848" strokeWidth="1.500" /><path d="M13 5l4-4 6 7-4 3z" fill={G} /></> },
    { name: "Curvature", art: <><path d="M1 2c4 3 1 7 0 12 0 6 4 8 7 8" stroke={G} strokeWidth="1.700" /><path d="M6 21l3-10 5-4 5 5-4 6z" fill={G} /><path d="M7 20l6-6" stroke="#484848" strokeWidth="1.300" /><path d="M15 5l2-3 6 6-3 2z" fill={G} /></> },
    { name: "Type", more: true, art: <><path d="M5 7V3h14v4M12 3v13M9 16h6" stroke={G} strokeWidth="2.600" /><path d="M2 21h20M5 18l-3 3 3 3" stroke={G} strokeWidth="1.600" /></> },
    { name: "Line Segment", more: true, art: <path d="M2 22 21 2" stroke={G} strokeWidth="2" /> },
    { name: "Rectangle", more: true, art: <rect x="2" y="3" width="21" height="18" fill="#777" stroke={G} strokeWidth="1.800" /> },
    { name: "Paintbrush", more: true, art: <><path d="M10 12 21 0l2 2-8 15z" fill={G} /><path d="M9 13l5 4c0 4-6 7-13 5 4-2 2-8 8-9z" fill={G} /></> },
    { name: "Shaper", more: true, art: <><circle cx="8" cy="10" r="8" fill="#777" stroke={G} strokeWidth="1.800" /><path d="M24 4 13 15l-4 5 5-2L24 6z" fill={G} stroke={G} strokeWidth="2" /></> },
    { name: "Eraser", more: true, art: <><path d="M8 8l7-8 9 9-8 8z" fill={G} /><path d="M8 8l8 9-5 6H9l-8-8z" stroke={G} strokeWidth="1.800" /></> },
  ],
  [
    { name: "Rotate", more: true, art: <><path d="M5 7c6-6 17-3 17 6" stroke={G} strokeWidth="2.400" /><path d="M1 1v10l9-3z" fill={G} /><path d="M21 16c-3 7-15 8-18-1" stroke={G} strokeWidth="1.800" strokeDasharray="2 2.500" /></> },
    { name: "Scale", more: true, art: <><path d="M7 2h16v15H7z" stroke={G} strokeWidth="1.700" /><path d="M1 12h12v10H1z" fill="#535353" stroke={G} strokeWidth="1.700" /><path d="M7 12v5h6" stroke={G} strokeWidth="1.500" /><path d="M15 10l4-4M15 5h5v5" stroke={G} strokeWidth="1.700" /></> },
    { name: "Width", more: true, art: <><path d="M0 4c3-3 7 0 7 4 0 3-1 5 1 5 3-1 3-8 6-8 2 0 1 5 3 6 2 0 3-1 7-1-2 6-8 7-10 2-2 5-6 9-9 9-4 1-5-2-2-4 4-3 1-9-3-13z" fill={G} /><path d="M3 20 19 6" stroke={G} strokeWidth="1.600" /><circle cx="3" cy="20" r="2" fill="#535353" stroke={G} strokeWidth="1.500" /><circle cx="11" cy="13" r="2" fill="#535353" stroke={G} /></> },
    { name: "Free Transform", art: <><path d="M9 4h13v16H9z" stroke={G} strokeWidth="1.600" strokeDasharray="5 1.500" /><path d="M0 1l14 12-8 1-6 6z" fill={G} /><path d="M20 2h4v4h-4zM20 18h4v4h-4zM7 18h4v4H7z" fill={G} /></> },
    { name: "Shape Builder", more: true, art: <><circle cx="8" cy="11" r="7" stroke={G} strokeWidth="1.600" /><path d="M6 5c5-5 14-3 16 4v5M7 17c2 2 5 2 8 1" stroke={G} strokeWidth="1.600" /><path d="M3 11h14" stroke={G} strokeWidth="1.400" strokeDasharray="1.500 1.500" /><path d="M15 9l10 11h-6l-4 4z" fill={G} /></> },
    { name: "Perspective Grid", more: true, art: <><path d="M2 2v20l12-6V6zM6 3v17M10 5v13M2 9l12 1M2 15l12-2M2 22h21" stroke={G} strokeWidth="1.600" /><path d="M14 14h3M12 17h7M8 20h13" stroke="#999" strokeWidth="1.300" /></> },
  ],
  [
    { name: "Mesh", art: <><path d="M2 3h20v18H2z" stroke={G} strokeWidth="1.700" /><path d="M2 8c7-2 10 8 20 4M2 17c5-6 14 3 20 1M8 3c7 6-4 12 0 18M17 3c-6 7 4 12-2 18M2 12c4-1 6 1 7 4" stroke={G} strokeWidth="1.600" /></> },
    { name: "Gradient", art: <rect x="2" y="3" width="20" height="18" fill="url(#dg)" stroke={G} strokeWidth="1.700" /> },
    { name: "Eyedropper", more: true, art: <><path d="M14 9 3 19l-1 4 4-1L16 11" stroke={G} strokeWidth="2" /><path d="M12 5l3-1 3-4c3-1 6 1 5 4l-4 4-1 3z" fill={G} /></> },
    { name: "Blend", art: <><path d="M1 2h10v10H1z" fill={G} /><rect x="8" y="6" width="9" height="9" rx="3" fill="#8b8b8b" stroke={G} strokeWidth="1.500" /><circle cx="18" cy="15" r="5.500" fill="#666" stroke={G} strokeWidth="1.700" /></> },
  ],
  [
    { name: "Symbol Sprayer", more: true, art: <><path d="M12 8h11v15H12z" stroke={G} strokeWidth="1.800" /><path d="M14 3h6v5h-6z" fill={G} /><circle cx="17.500" cy="15" r="3" stroke={G} strokeWidth="2" /><path d="M0 3h10M0 7h6M0 11h3" stroke={G} strokeWidth="2.200" strokeDasharray="2 2" /></> },
    { name: "Column Graph", more: true, art: <><path d="M1 2v20h22" stroke={G} strokeWidth="1.700" /><path d="M6 12h4v8H6zM12 3h4v17h-4zM18 6h4v14h-4z" fill={G} /></> },
  ],
  [
    { name: "Artboard", art: <><path d="M6 8h11l5 4v10H6z" fill="#777" stroke={G} strokeWidth="1.800" /><path d="M17 8v5h5" stroke={G} strokeWidth="1.500" /><path d="M7 0v5M0 7h4" stroke={G} strokeWidth="1.500" /></> },
    { name: "Slice", more: true, art: <><path d="M2 22 12 8l6 5z" stroke={G} strokeWidth="1.700" /><path d="M13 6l4-6 7 6-4 6z" fill={G} /></> },
    { name: "Hand", more: true, art: <path d="M9 23c-4-3-5-7-9-11 2-2 4 0 7 3L4 4c2-2 3 0 4 7l1-10c2-2 3 0 3 9l3-9c2-1 3 0 1 10l4-7c2-1 3 1 1 8-1 7-3 9-5 11z" fill={G} /> },
    { name: "Zoom", art: <><circle cx="9" cy="9" r="7.500" stroke={G} strokeWidth="2" /><path d="M15 15l8 8" stroke={G} strokeWidth="3.200" /></> },
  ],
];

function ToolsPanel() {
  return (
    <aside className="absolute top-[258px] bottom-10 left-3 flex w-[90px] flex-col overflow-hidden rounded-t-md bg-[#535353] shadow-[0_0_4px_#0009]">
      <div className="flex h-[17px] shrink-0 items-center justify-end gap-3 bg-[#3f3f3f] pr-2 text-[#c9c9c9]">
        <DoubleLeft className="h-2.5 w-2.5" />
        <Cross className="h-2 w-2" width={4} />
      </div>
      <div className="flex h-[23px] shrink-0 justify-center pt-[5px]">
        <Grip />
      </div>
      {toolGroups.map((group) => (
        <div key={group[0].name} className="ml-2 w-[76px] shrink-0 border-b border-[#494949] pb-0.5 [&:not(:nth-child(3))]:pt-[3px]">
          <div className="grid grid-cols-2">
            {group.map((t) => (
              <button
                key={t.name}
                aria-label={t.name}
                className={`relative flex h-[30px] items-center justify-center ${
                  t.selected ? "before:absolute before:inset-x-[2px] before:inset-y-px before:rounded-sm before:bg-[#2e2a2b]" : ""
                }`}
              >
                <Svg className="relative h-[22px] w-[22px]">{t.art}</Svg>
                {t.more && (
                  <svg viewBox="0 0 4 4" className="absolute right-[3px] bottom-[3px] h-1 w-1">
                    <path d="M4 0v4H0z" fill={G} />
                  </svg>
                )}
              </button>
            ))}
          </div>
        </div>
      ))}
      <div className="relative mt-1 ml-[9px] h-[73px] shrink-0">
        <button aria-label="Stroke" className="absolute top-[25px] left-[22px] flex h-[44px] w-[44px] items-center justify-center border border-[#c9c9c9] bg-[#231f20]">
          <span className="h-[22px] w-[22px] border border-[#c9c9c9] bg-[#535353]" />
        </button>
        <button aria-label="Fill" className="absolute top-0.5 left-0 h-[45px] w-[45px] border border-[#333] bg-white" />
        <button aria-label="Swap fill and stroke" className="absolute top-1 left-[55px]">
          <Svg className="h-3.5 w-3.5">
            <path d="M5 6h9c4 0 5 3 5 5v7" stroke={G} strokeWidth="2.500" />
            <path d="M0 6l7-6v12zM19 24l-6-7h11z" fill={G} />
          </Svg>
        </button>
        <button aria-label="Default fill and stroke" className="absolute top-[54px] left-0">
          <Svg className="h-3.5 w-3.5">
            <path d="M9 9h13v13H9z" fill="#231f20" stroke="#aaa" strokeWidth="1.500" />
            <path d="M2 2h13v13H2z" fill="#fff" stroke="#222" strokeWidth="2" />
          </Svg>
        </button>
      </div>
      <div className="mt-2 ml-2 flex gap-1">
        <button aria-label="Color" className="flex h-[22px] w-[22px] items-center justify-center bg-[#2c2829]">
          <span className="h-3.5 w-3.5 border border-black bg-white" />
        </button>
        <button aria-label="Gradient" className="flex h-[22px] w-[22px] items-center justify-center">
          <span className="h-4 w-4 border-2 border-[#1c1819] bg-gradient-to-r from-white to-[#444]" />
        </button>
        <button aria-label="None" className="flex h-[22px] w-[22px] items-center justify-center">
          <Svg className="h-4 w-4">
            <path d="M1 1h22v22H1z" fill="#fff" stroke="#1c1819" strokeWidth="3" />
            <path d="M4 20 20 4" stroke="#ee3350" strokeWidth="5" />
          </Svg>
        </button>
      </div>
    </aside>
  );
}

export default function App() {
  return (
    <div dir="ltr" className={`flex h-screen flex-col overflow-hidden bg-black ${FONT}`}>
      <BrowserHeader />
      <main className="flex min-h-0 flex-1">
        <div className="relative ml-[157px] flex flex-1 flex-col overflow-hidden">
          <InnerBrowser />
          <InnerTaskbar />
          <IllustratorWindow />
          <ToolsPanel />
        </div>
        <button aria-label="Thumbnails" className="flex w-[158px] flex-col items-end justify-center gap-2 pr-1.5">
          <span className="h-2.5 w-2.5 rounded-full bg-[#16304a]" />
          <span className="h-2.5 w-2.5 rounded-full bg-[#16304a]" />
          <span className="h-2.5 w-2.5 rounded-full bg-[#16304a]" />
        </button>
      </main>
      <OuterTaskbar />
    </div>
  );
}
